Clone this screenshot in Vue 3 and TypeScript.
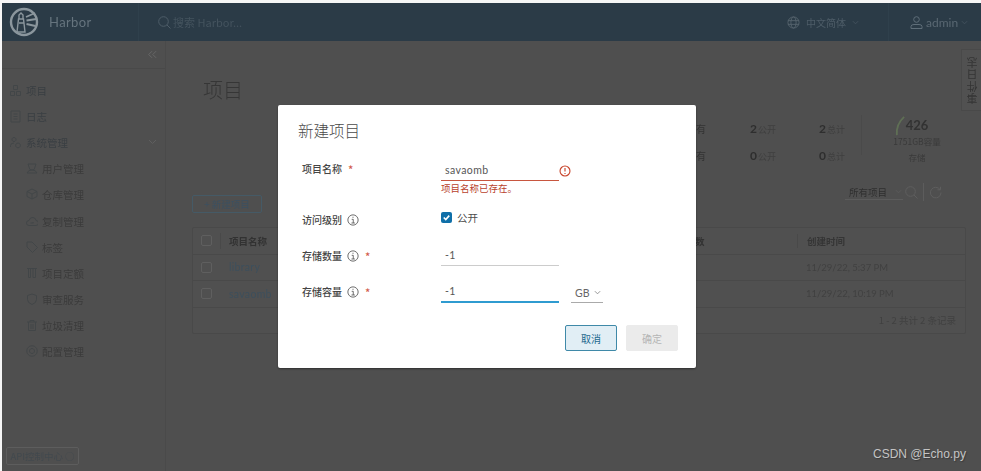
<script setup lang="ts">
interface Nav { label: string; icon: string; sub?: boolean }
const nav: Nav[] = [
  { label: '项目', icon: 'M3.500 1.500h4v4h-4zM.5 7.500h4v4h-4zM6.500 7.500h4v4h-4z' },
  { label: '日志', icon: 'M1 1h9v11H1zM3.500 4h4M3.500 6.500h4M3.500 9h4' },
  { label: '系统管理', icon: 'M4 1.500a2 2 0 1 0 .01 0zM.5 11V9.500q0-2.500 3.500-2.500M8 7a2.400 2.400 0 1 0 .01 0z' },
  { label: '用户管理', sub: true, icon: 'M2 2h8L9 5a3 3 0 0 1-6 0zM1 11q1-3 5-3t5 3z' },
  { label: '仓库管理', sub: true, icon: 'M6 1l5 2.500v5L6 11 1 8.500v-5zM1 3.500 6 6l5-2.500M6 6v5' },
  { label: '复制管理', sub: true, icon: 'M3 10.500a2.500 2.500 0 0 1 0-5q1-3.500 4-3 3 .5 3 3a2.500 2.500 0 0 1 0 5zM4.500 8h3M7.500 8l-1-1' },
  { label: '标签', sub: true, icon: 'M1 1h5l5.500 5.500-5 5L1 6z' },
  { label: '项目定额', sub: true, icon: 'M1 1.500h10M2.500 1.500v9h2v-9M7 1.500v9h2.500v-9' },
  { label: '审查服务', sub: true, icon: 'M6 1l4.500 1.500v4q0 3.500-4.500 5-4.500-1.500-4.500-5v-4z' },
  { label: '垃圾清理', sub: true, icon: 'M1 3h10M4 3V1.500h4V3M2.500 3v8.500h7V3M5 5v5M7 5v5' },
  { label: '配置管理', sub: true, icon: 'M6 .8a5.200 5.200 0 1 0 .01 0zM6 3.500a2.500 2.500 0 1 0 .01 0z' },
]
const rows = [
  { name: 'library', time: '11/29/22, 5:37 PM' },
  { name: 'savaomb', time: '11/29/22, 10:19 PM' },
]
const stats = [
  { label: '有', pub: '2', total: '2' },
  { label: '有', pub: '0', total: '0' },
]
</script>

<template>
  <div class="screen">
    <div class="shell">
      <header class="topbar">
        <div class="brand">
          <svg class="logo" viewBox="0 0 30 30" fill="none" stroke="#8b969d">
            <circle cx="15" cy="15" r="13" stroke-width="2.400" />
            <path d="M8 25l1.500-13h5L16 25zM10 12V8l2-2 2 2v4M10 16h5" stroke-width="1.400" />
            <path d="M17 10l9-4M17.500 13.500l10-1.500M17.500 17l9 2" stroke-width="1.800" />
          </svg>
          <span class="brand-name">Harbor</span>
        </div>
        <div class="search">
          <svg class="ic13" viewBox="0 0 13 13" fill="none" stroke="#4e5d68"><circle cx="5.500" cy="5.500" r="4.800" /><path d="M9 9l3.500 3.500" /></svg>
          <span>搜索 Harbor...</span>
        </div>
        <div class="lang">
          <svg class="ic13" viewBox="0 0 14 14" fill="none" stroke="#56646e"><circle cx="7" cy="7" r="6" /><ellipse cx="7" cy="7" rx="2.800" ry="6" /><path d="M1 5h12M1 9h12" /></svg>
          <span>中文简体</span>
          <svg class="caret" viewBox="0 0 8 5" fill="none" stroke="#45545f"><path d="M1 1l3 3 3-3" /></svg>
        </div>
        <div class="user">
          <svg class="ic13" viewBox="0 0 13 13" fill="none" stroke="#5f6e79"><circle cx="6.500" cy="3.500" r="2.800" /><path d="M1 12.500v-2q0-2 3-2h5q3 0 3 2v2z" /></svg>
          <span>admin</span>
          <svg class="caret" viewBox="0 0 8 5" fill="none" stroke="#45545f"><path d="M1 1l3 3 3-3" /></svg>
        </div>
      </header>

      <div class="body">
        <aside class="side">
          <div class="collapse">
            <svg viewBox="0 0 10 9" fill="none" stroke="#6a6a6a"><path d="M4.500.8.800 4.500l3.700 3.700M9 .8 5.300 4.500 9 8.200" /></svg>
          </div>
          <nav class="nav">
            <div v-for="item in nav" :key="item.label" class="nav-row" :class="{ sub: item.sub }">
              <svg class="nav-icon" viewBox="0 0 12 13" fill="none" stroke="#424648"><path :d="item.icon" /></svg>
              <span>{{ item.label }}</span>
              <svg v-if="item.label === '系统管理'" class="nav-chevron" viewBox="0 0 9 6" fill="none" stroke="#5f5f5f"><path d="M1 1l3.500 3.500L8 1" /></svg>
            </div>
          </nav>
          <div class="api-wrap">
            <button class="api">API控制中心 ○</button>
          </div>
        </aside>

        <main class="main">
          <div class="head">
            <h1 class="title">项目</h1>
            <div class="summary">
              <div class="stats">
                <template v-for="(s, i) in stats" :key="i">
                  <div class="stat-label">{{ s.label }}</div>
                  <div class="stat"><b>{{ s.pub }}</b>公开</div>
                  <div class="stat"><b>{{ s.total }}</b>总计</div>
                </template>
              </div>
              <div class="storage">
                <svg class="arc" viewBox="0 0 12 22" fill="none" stroke="#5f6f55" stroke-width="2"><path d="M2 21Q1 9 10 1" /></svg>
                <div class="storage-num">426</div>
                <div class="storage-cap">1751GB容量</div>
                <div class="storage-name">存储</div>
              </div>
            </div>
          </div>

          <div class="toolbar">
            <button class="new-btn">+ 新建项目</button>
            <div class="tools">
              <div class="filter">所有项目<svg class="caret" viewBox="0 0 8 5" fill="none" stroke="#5c5c5c"><path d="M1 1l3 3 3-3" /></svg></div>
              <svg class="ic13 tool-search" viewBox="0 0 13 13" fill="none" stroke="#5e5e5e"><circle cx="5.500" cy="5.500" r="4.800" /><path d="M9 9l3.500 3.500" /></svg>
              <i class="tool-div"></i>
              <svg class="ic13" viewBox="0 0 13 13" fill="none" stroke="#5e5e5e"><path d="M11 3.500a5.300 5.300 0 1 0 1 3M11.500 .8v3h-3" /></svg>
            </div>
          </div>

          <div class="table">
            <div class="tr th">
              <div class="cell check"><i class="box"></i></div>
              <div class="cell name">项目名称</div>
              <div class="cell count">镜像仓库数</div>
              <div class="cell time">创建时间</div>
            </div>
            <div v-for="r in rows" :key="r.name" class="tr">
              <div class="cell check"><i class="box"></i></div>
              <div class="cell name link">{{ r.name }}</div>
              <div class="cell count"></div>
              <div class="cell time">{{ r.time }}</div>
            </div>
            <div class="tfoot">1 - 2 共计 2 条记录</div>
          </div>
        </main>

        <div class="event-tab"><span>事件日志</span></div>
      </div>
    </div>

    <div class="backdrop">
      <section class="modal">
        <h2 class="modal-title">新建项目</h2>
        <div class="form">
          <div class="f-row r-name">
            <label class="f-label">项目名称<em>*</em></label>
            <div class="f-control">
              <div class="input err">savaomb
                <svg class="err-icon" viewBox="0 0 14 14" fill="none" stroke="#c8442b" stroke-width="1.300"><circle cx="7" cy="7" r="5.800" /><path d="M7 3.500v4.200M7 9.300v1.200" /></svg>
              </div>
              <div class="err-msg">项目名称已存在。</div>
            </div>
          </div>
          <div class="f-row r-level">
            <label class="f-label">访问级别<svg class="info" viewBox="0 0 14 14" fill="none" stroke="#555"><circle cx="7" cy="7" r="6" /><path d="M7 3.200v1.300M5.500 6.200H7.300V10.500M5.200 10.500h4" /></svg></label>
            <div class="f-control check-line">
              <span class="cb"><svg viewBox="0 0 12 12" fill="none" stroke="#fff" stroke-width="1.800"><path d="M3 6l2.200 2.200L9 4" /></svg></span>
              <span>公开</span>
            </div>
          </div>
          <div class="f-row r-count">
            <label class="f-label">存储数量<svg class="info" viewBox="0 0 14 14" fill="none" stroke="#555"><circle cx="7" cy="7" r="6" /><path d="M7 3.200v1.300M5.500 6.200H7.300V10.500M5.200 10.500h4" /></svg><em>*</em></label>
            <div class="f-control"><div class="input plain">-1</div></div>
          </div>
          <div class="f-row r-cap">
            <label class="f-label">存储容量<svg class="info" viewBox="0 0 14 14" fill="none" stroke="#555"><circle cx="7" cy="7" r="6" /><path d="M7 3.200v1.300M5.500 6.200H7.300V10.500M5.200 10.500h4" /></svg><em>*</em></label>
            <div class="f-control cap-line">
              <div class="input focus">-1</div>
              <div class="unit">GB<svg class="caret" viewBox="0 0 8 5" fill="none" stroke="#888"><path d="M1 1l3 3 3-3" /></svg></div>
            </div>
          </div>
        </div>
        <div class="actions">
          <button class="btn cancel">取消</button>
          <button class="btn ok">确定</button>
        </div>
      </section>
    </div>

    <div class="watermark">CSDN @Echo.py</div>
  </div>
</template>

<style scoped>
.screen {
  position: relative;
  width: 981px;
  height: 471px;
  overflow: hidden;
  background: #f6f6f6;
  padding: 3px 0 0 2px;
  box-sizing: border-box;
  font-family: "Noto Sans CJK SC", "Lato", sans-serif;
  font-size: 10px;
  color: #3b3b3b;
}
.shell {
  display: flex;
  flex-direction: column;
  height: 468px;
  background: #4f4f4f;
  filter: blur(0.6px);
}
.ic13 { width: 13px; height: 13px; flex: none; }
.caret { width: 7px; height: 5px; flex: none; }

.topbar {
  display: flex;
  align-items: center;
  height: 38px;
  flex: none;
  background: #2b3b47;
  color: #55646f;
}
.brand {
  display: flex;
  align-items: center;
  width: 137px;
  height: 100%;
  border-right: 1px solid #2f404c;
  box-sizing: border-box;
}
.logo { width: 30px; height: 30px; margin-left: 7px; }
.brand-name {
  margin-left: 10px;
  font: 13px "Lato", sans-serif;
  color: #66747e;
  letter-spacing: .4px;
}
.search {
  display: flex;
  align-items: center;
  gap: 2px;
  margin-left: 19px;
  flex: 1;
  color: #44535e;
  font-size: 11px;
}
.lang {
  display: flex;
  align-items: center;
  gap: 6px;
  width: 102px;
  height: 100%;
  box-sizing: border-box;
  border-right: 1px solid #2f404c;
  color: #4e5d68;
}
.user {
  display: flex;
  align-items: center;
  gap: 3px;
  width: 92px;
  padding-left: 21px;
  box-sizing: border-box;
  font: 12px "Lato", sans-serif;
  color: #5a6873;
}

.body { flex: 1; display: flex; min-height: 0; position: relative; }
.side {
  width: 164px;
  flex: none;
  display: flex;
  flex-direction: column;
  border-right: 1px solid #4a4a4a;
  box-sizing: border-box;
}
.collapse {
  height: 28px;
  flex: none;
  display: flex;
  align-items: center;
  justify-content: flex-end;
  padding-right: 8px;
  border-bottom: 1px solid #494949;
  box-sizing: border-box;
}
.collapse svg { width: 9px; height: 9px; }
.nav { margin-top: 8px; flex: 1; }
.nav-row {
  display: flex;
  align-items: center;
  height: 26.2px;
  padding-left: 8px;
  gap: 4px;
  color: #3a3f43;
  font-size: 10.500px;
}
.nav-row.sub { padding-left: 24px; gap: 4px; color: #3b3b3b; }
.nav-icon { width: 12px; height: 13px; flex: none; }
.nav-chevron { width: 9px; height: 6px; margin-left: auto; margin-right: 8px; }
.api-wrap { padding: 0 0 6px 4px; }
.api {
  width: 73px;
  height: 18px;
  padding: 0;
  background: transparent;
  border: 1px solid #5d5d5d;
  border-radius: 2px;
  color: #42494e;
  font: 9.500px "Noto Sans CJK SC", sans-serif;
  white-space: nowrap;
}

.main { flex: 1; min-width: 0; padding: 0 15px 0 26px; }
.head { display: flex; justify-content: space-between; height: 142px; }
.title {
  margin: 35px 0 0 11px;
  font-size: 20px;
  line-height: 28px;
  font-weight: 300;
  color: #363636;
}
.summary { display: flex; margin-top: 75px; align-items: flex-start; }
.stats {
  display: grid;
  grid-template-columns: 71px 69px 42px;
  grid-auto-rows: 27px;
  margin-top: -1px;
  align-items: center;
  border-right: 1px solid #4a4a4a;
  height: 40px;
}
.stat-label { padding-left: 17px; color: #333; }
.stat { white-space: nowrap; font-size: 9px; color: #3f3f3f; }
.stat b { font: 700 12px "Lato", sans-serif; color: #2e2e2e; margin-right: 1px; }
.storage {
  position: relative;
  width: 104px;
  padding: 0 0 0 6px;
  box-sizing: border-box;
  text-align: center;
  margin-top: 1px;
}
.arc { position: absolute; left: 33px; top: -1px; width: 11px; height: 20px; }
.storage-num { font: 700 13px/16px "Lato", sans-serif; color: #323232; }
.storage-cap { font-size: 8.500px; line-height: 16px; color: #3a3a3a; }
.storage-name { font-size: 8.500px; line-height: 17px; color: #3a3a3a; }

.toolbar { display: flex; justify-content: space-between; align-items: flex-start; height: 44px; }
.new-btn {
  margin-top: 12px;
  width: 70px;
  height: 18px;
  padding: 0;
  background: transparent;
  border: 1px solid #455a66;
  border-radius: 2px;
  color: #3c5060;
  font: 9.500px "Noto Sans CJK SC", sans-serif;
}
.tools { display: flex; align-items: center; margin-top: 1px; padding-right: 24px; height: 16px; }
.filter {
  display: flex;
  align-items: center;
  gap: 8px;
  width: 58px;
  box-sizing: border-box;
  height: 16px;
  padding-left: 4px;
  border-bottom: 1px solid #5c5c5c;
  color: #2f2f2f;
  font-size: 9.500px;
}
.tool-search { margin-left: 2px; }
.tool-div { width: 1px; height: 18px; background: #5c5c5c; margin: 0 5px; }

.table {
  border: 1px solid #494949;
  border-radius: 2px;
  background: #505050;
  font-size: 9.500px;
}
.tr {
  display: grid;
  grid-template-columns: 28px 1fr 147px 168px;
  height: 26.500px;
  align-items: center;
  border-bottom: 1px solid #494949;
  box-sizing: border-box;
}
.th { font-weight: 700; color: #323232; }
.cell { padding-left: 8px; white-space: nowrap; }
.check { padding-left: 8px; border-right: 1px solid transparent; }
.th .check { border-right-color: #494949; height: 16px; display: flex; align-items: center; }
.box { display: block; width: 11px; height: 11px; border: 1px solid #5f5f5f; border-radius: 2px; box-sizing: border-box; }
.count { padding-left: 7px; }
.time { color: #414141; padding-left: 9px; font-family: "Lato", sans-serif; }
.th .time { color: #353535; font-family: "Noto Sans CJK SC", sans-serif; border-left: 1px solid #494949; }
.link { color: #3d4f5c; font: 10.500px "Lato", sans-serif; letter-spacing: .3px; }
.tfoot { height: 25px; line-height: 25px; text-align: right; padding-right: 9px; color: #414141; font-size: 9.500px; }

.event-tab {
  position: absolute;
  right: 0;
  top: 8px;
  width: 20px;
  height: 62px;
  border: 1px solid #494949;
  border-right: 0;
  box-sizing: border-box;
  background: #515151;
  display: flex;
  align-items: center;
  justify-content: center;
}
.event-tab span { writing-mode: vertical-rl; transform: rotate(180deg); color: #343434; font-size: 11px; letter-spacing: .8px; }

.backdrop { position: absolute; inset: 0; padding: 105px 0 0 278px; box-sizing: border-box; }
.modal {
  width: 418px;
  height: 263px;
  background: #fff;
  box-sizing: border-box;
  padding: 15px 18px 0 20px;
  border-radius: 2px;
  box-shadow: 0 1px 2px rgba(0, 0, 0, .4);
  display: flex;
  flex-direction: column;
}
.modal-title { margin: 0; font-size: 15.500px; line-height: 21px; font-weight: 300; color: #4a4a4a; }
.form { padding-left: 4px; flex: none; }
.f-row { display: flex; align-items: flex-start; }
.f-label { display: flex; align-items: center; width: 139px; flex: none; font-size: 10px; font-weight: 500; color: #454545; line-height: 14px; }
.f-label em { color: #d25b4c; font-style: normal; margin-left: 6px; font-size: 11px; }
.info { width: 12px; height: 12px; margin-left: 5px; flex: none; }
.f-control { flex: 1; min-width: 0; }
.input { position: relative; width: 118px; height: 19px; box-sizing: border-box; padding-left: 4px; font: 10.500px/16px "Lato", sans-serif; letter-spacing: .4px; color: #565656; }
.err { border-bottom: 1px solid #c8563f; }
.plain { border-bottom: 1px solid #ccc; }
.focus { height: 20px; border-bottom: 2px solid #2f9bd0; }
.err-icon { position: absolute; right: -12px; top: 3px; width: 12px; height: 12px; }
.err-msg { margin-top: 0; color: #b8412c; font-size: 9.500px; line-height: 14px; }
.r-name { margin-top: 21px; height: 48px; }
.r-level { height: 37px; }
.r-level .f-label { margin-top: 3px; }
.check-line { display: flex; align-items: center; gap: 5px; color: #4c4c4c; font-size: 10.500px; height: 14px; }
.cb { width: 11px; height: 11px; border-radius: 2px; background: #0f6fa8; display: block; }
.cb svg { display: block; width: 11px; height: 11px; }
.r-count { height: 36px; }
.r-count .f-label { margin-top: 2px; }
.r-cap { height: 33px; }
.r-cap .f-label { margin-top: 2px; }
.cap-line { display: flex; gap: 12px; }
.unit { display: flex; align-items: center; gap: 5px; width: 32px; height: 20px; box-sizing: border-box; padding-left: 4px; border-bottom: 1px solid #aaa; font: 10.500px "Lato", sans-serif; color: #666; }
.actions { display: flex; justify-content: flex-end; gap: 9px; margin-top: auto; margin-bottom: 17px; }
.btn { width: 52px; height: 26px; padding: 0; border-radius: 2px; font: 10px "Noto Sans CJK SC", sans-serif; }
.cancel { background: #e1eef5; border: 1px solid #3f89a8; color: #22688f; }
.ok { background: #ebebeb; border: 1px solid #ebebeb; color: #b5b5b5; }

.watermark {
  position: absolute;
  left: 873px;
  top: 447px;
  font: 12px/15px "Liberation Sans", sans-serif;
  color: #c4c4c4;
  text-shadow: 1px 1px 1px #3a3a3a;
}
</style>
